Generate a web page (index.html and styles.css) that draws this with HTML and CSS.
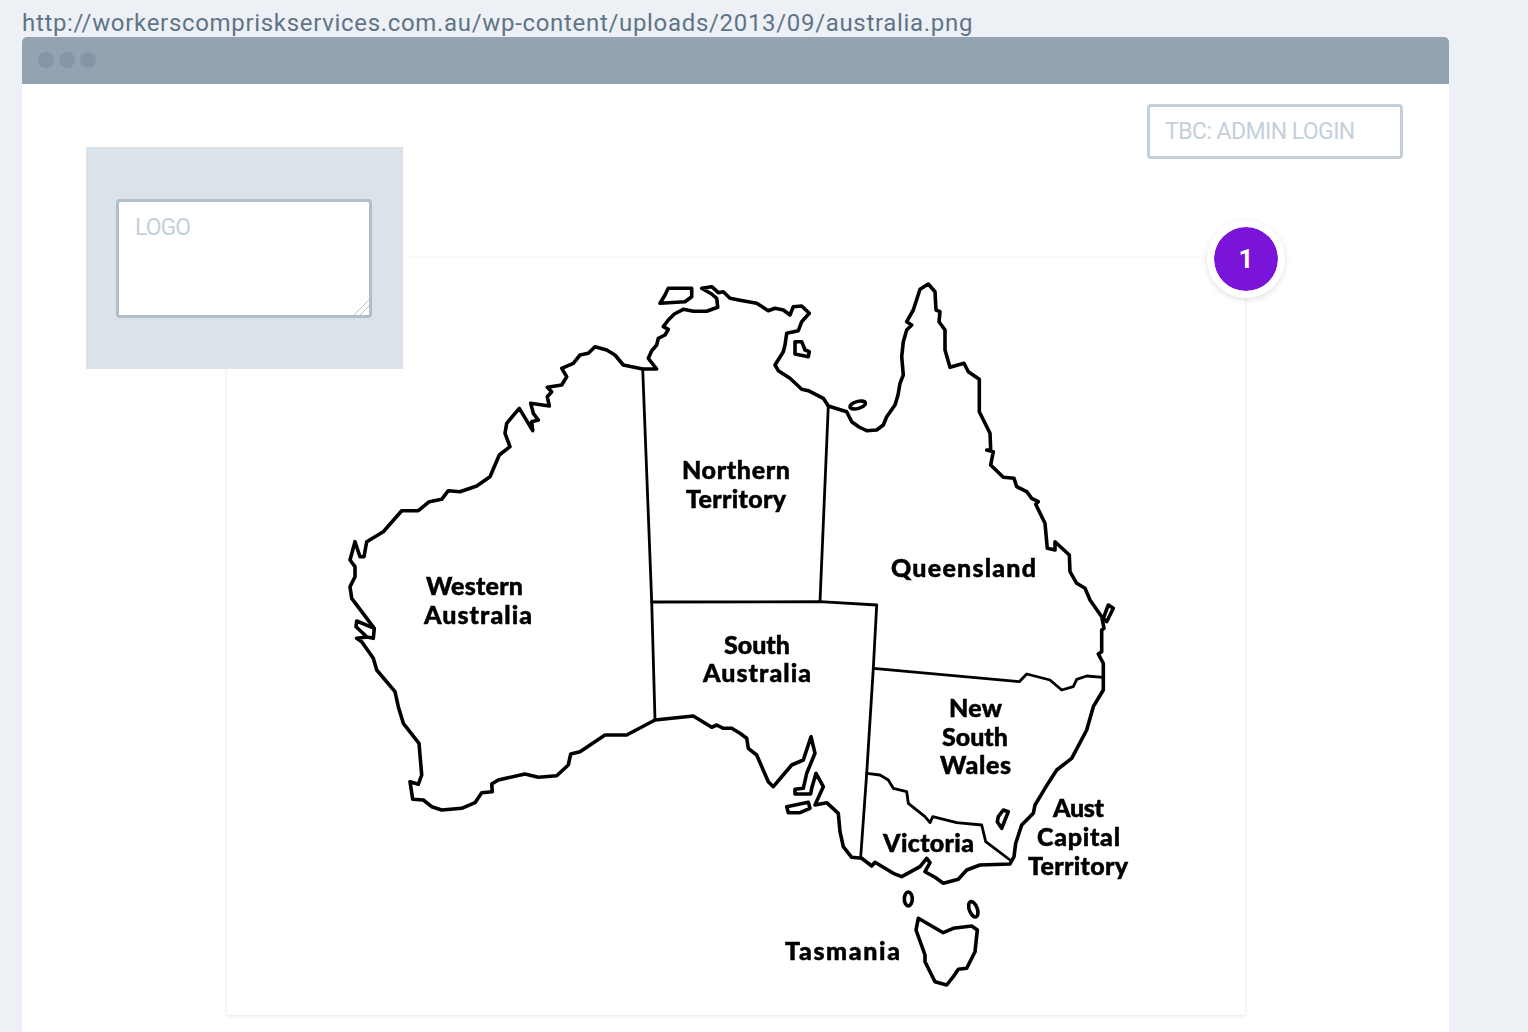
FILE: index.html
```html
<!DOCTYPE html>
<html lang="en">

<head>
    <meta charset="UTF-8">
    <meta name="viewport" content="width=device-width, initial-scale=1.0">
    <title>Admin wireframe</title>
    <link rel="stylesheet" href="styles.css">
</head>

<body>
    <p class="page-url">http://workerscompriskservices.com.au/wp-content/uploads/2013/09/australia.png</p>
    <div class="window">
        <div class="window-bar">
            <span class="dot"></span>
            <span class="dot"></span>
            <span class="dot"></span>
        </div>
        <div class="window-body">
            <div class="login-row">
                <input class="login-input" type="text" placeholder="TBC: ADMIN LOGIN">
            </div>
            <div class="logo-panel">
                <textarea class="logo-input" placeholder="LOGO"></textarea>
            </div>
            <div class="map-card">
                <span class="badge">1</span>
                <!-- viewBox uses page coordinates, so the numbers can be read off the screenshot -->
                <svg class="map" viewBox="227 257 1018 758">
                    <g class="coast">
                        <polygon points="642.7,369 656.7,369 648.3,358.3 651.7,350.7 656.7,345 658.3,338.3 665,335 668.3,329.3 663.3,326.7 668.3,320 674.3,314 683.3,309.3 693.3,311.3 706.7,311.3 717.7,307.3 716.7,298.3 711.7,294 701.7,288.3 711.7,286.7 718.3,292.7 723.3,291.7 730,298.3 740,300.3 756.7,303.3 768.3,310.7 775,308.3 783.3,310 790,315 793.3,306.7 801.7,306 809.3,313.3 801.7,321.7 798.3,330.7 786.7,333.3 785,345 783.3,351.7 775,365 778.3,370.7 790,378.3 801.7,389.3 808.3,390.7 823.3,398.3 828.3,406 846.7,411.7 851.7,421.7 859,427 866.7,430.7 876.7,430 883.3,425 886.7,416.7 895,405 898,395 900,383.3 903.3,375 901.7,356.7 903.3,341.7 906.7,330 911.7,325 906.7,321.7 913.3,310 920,289.3 928.3,284 935,291.7 936,310 940,311.7 939,321.7 945,330 945,350 950,367.3 964,363.3 968.3,371.7 979.3,379.3 979.3,411.7 990,433.3 990.7,450 986.7,450 993.3,451.7 990.7,465 1003.3,477.3 1014,478.3 1016.7,486.7 1026.7,491.7 1031.7,498.3 1038.3,501.7 1035.7,504.3 1045,523.3 1047.3,548.3 1055,550 1055,541.7 1069.3,555 1070,571.7 1076.7,583.3 1085,588.3 1090,600 1101.7,616.7 1104,628.3 1101.7,630 1101.7,651.7 1098.3,654 1103.3,663.3 1103.3,690 1093.3,706.7 1086.7,730 1071.7,758.3 1056.7,770 1045,788.3 1035,805 1033.3,813.3 1021.7,825 1015.7,843.3 1014,856.7 1010,864 980,865 966.7,870 958.3,879.3 943.3,883.3 935,877.3 925,871.7 930,862.7 926.7,858.3 920,866.7 901.7,876.7 893.3,873.3 875,862.3 871.7,866 861.7,858.3 851.7,857.3 843.3,846.7 840,831.7 838.3,813.3 826.7,802.7 815,805 823.3,786.7 816,773.3 811.7,788.3 810.7,794 795,794 795,789.3 803.3,788.3 806.7,773.3 815,753.3 811,736.7 803.3,760 791.7,765 773.3,786.7 768.3,781.7 756.7,755 748.3,748.3 746.7,738.3 740,733.3 731.7,728.3 723.3,728.3 716.7,725 711.7,727.3 693.3,716 655,720 626.7,735 605,735 580,751.7 570.7,754 568.3,765 556.7,775.7 538.3,777.3 525,774 498.3,780 491.7,784 492.3,791.7 481.7,792.7 475,802.7 461.7,808.3 441.7,810 431.7,806.7 423.3,800 412.7,799.3 410,781.7 418.3,784.3 421.7,775 419,743.3 403.3,723.3 398.3,706.7 395,691.7 376.7,670 373.3,658.3 361.7,641.7 356.7,638.3 367,637 373.3,638.3 374.3,628.3 356.7,621 356,626.7 367,637 373.3,638.3 374.3,628.3 361.7,611.7 351.7,598.3 350,586.7 355,576.7 355,566.7 350,560 355,541.7 360,556.7 364,556.7 366.7,541.7 383.3,531.7 401.7,510.7 418.3,510.7 429.3,501.7 441.7,499.3 448.3,490.7 460,491.7 476.7,486 490,476.7 499.3,455 510,446.7 505,433.3 506.7,423.3 519.3,408.3 532.7,430.7 531.7,421.7 538.3,420 533.3,413.3 530.7,403.3 549.3,406 547.3,396.7 551.7,391.7 547.3,387.3 561.7,385 566.7,376.7 561.7,368.3 573.3,363.3 580,355 588.3,353.3 595,346.7 606.7,350 615,355 623.3,365" />
                        <polygon points="668.3,288.3 691.7,288.3 691.7,296.7 685,301.7 660,303.3 665,295" />
                        <polygon points="795,341.7 801.7,341.7 805,350 809.3,351.7 808.3,356.7 795,354" />
                        <polygon points="1108.3,605 1113.3,608.3 1106.7,621.7 1103.3,618.3" />
                        <polygon points="786.7,806.7 808.3,802.3 810,808.3 800,812.7 788.3,812.7" />
                        <polygon points="998.3,816.7 1003.3,810 1008.3,811.7 1005,820 1001.7,828.3 997.3,821.7" />
                        <polygon points="918.3,918.3 943.3,932.7 953.3,928.3 971.7,926 977.3,930 975,951.7 966.7,968.3 958.3,969.3 953.3,976.7 946.7,985 935,981.7 925,961.7 925,955 916,930" />
                        <ellipse cx="857.7" cy="405" rx="8" ry="3.5" transform="rotate(-15 857.7 405)" />
                        <ellipse cx="908.3" cy="899" rx="4" ry="7" />
                        <ellipse cx="973.3" cy="909.3" rx="4" ry="8" transform="rotate(-20 973.3 909.3)" />
                    </g>
                    <g class="borders">
                        <polyline points="642.7,369 651.7,602 655,720" />
                        <polyline points="651.7,602 820,601.7 876.7,605 873.3,668.3 866.7,773.3 860.7,857" />
                        <polyline points="828.3,406 820,601.7" />
                        <polyline points="873.3,668.3 1019.3,681.7 1026.7,674 1050,680 1061.7,690 1073.3,686.7 1076.7,679.3 1086.7,676 1103.3,677.3" />
                        <polyline points="866.7,773.3 880,775 888.3,780 893.3,788.3 906.7,791.7 908.3,803.3 925,816.7 930,822.7 932.7,816.7 956.7,822.7 981.7,825 985.7,841.7 1010,860" />
                    </g>
                    <g class="labels">
                        <text x="736" y="479" textLength="108">Northern</text>
                        <text x="736" y="508" textLength="100">Territory</text>
                        <text x="963.5" y="577" textLength="145">Queensland</text>
                        <text x="474.5" y="595" textLength="97">Western</text>
                        <text x="478" y="624" textLength="108">Australia</text>
                        <text x="757" y="654" textLength="66">South</text>
                        <text x="757" y="682" textLength="108">Australia</text>
                        <text x="975.5" y="717" textLength="53">New</text>
                        <text x="975" y="746" textLength="66">South</text>
                        <text x="975.5" y="774" textLength="71">Wales</text>
                        <text x="928.5" y="852" textLength="91">Victoria</text>
                        <text x="1078.5" y="817" textLength="51">Aust</text>
                        <text x="1078.5" y="846" textLength="83">Capital</text>
                        <text x="1078" y="875" textLength="100">Territory</text>
                        <text x="842.5" y="960" textLength="115">Tasmania</text>
                    </g>
                </svg>
            </div>
        </div>
    </div>
</body>

</html>
```
FILE: styles.css
```css
* {
    box-sizing: border-box;
}

html,
body {
    height: 100%;
}

body {
    margin: 0;
    padding: 0 79px 0 22px;
    background-color: #edf1f6;
    font-family: "Roboto", "Liberation Sans", sans-serif;
    overflow: hidden;
    display: flex;
    flex-direction: column;
}

.page-url {
    margin: 0;
    height: 37px;
    padding-top: 9px;
    font-size: 24px;
    line-height: 28px;
    letter-spacing: 0.68px;
    color: #607487;
    white-space: nowrap;
}

.window {
    flex: 1;
    display: flex;
    flex-direction: column;
    border-radius: 5px 5px 0 0;
    overflow: hidden;
    background: #fff;
}

.window-bar {
    height: 47px;
    padding: 0 0 2px 16px;
    background-color: #94a3b1;
    display: flex;
    align-items: center;
    gap: 5px;
}

.dot {
    width: 16px;
    height: 16px;
    border-radius: 50%;
    background-color: #8596a6;
}

.window-body {
    position: relative;
    flex: 1;
}

.login-row {
    display: flex;
    justify-content: flex-end;
    padding: 20px 46px 0 0;
}

.login-input {
    width: 256px;
    height: 55px;
    padding: 0 16px 0 15px;
    border: 3px solid #c3d0db;
    border-radius: 4px;
    background: #fff;
    font: inherit;
    font-size: 23px;
    letter-spacing: -0.56px;
}

.login-input::placeholder {
    color: #c3d0db;
    opacity: 1;
}

.logo-panel {
    position: absolute;
    left: 64px;
    top: 63px;
    z-index: 2;
    width: 317px;
    height: 222px;
    padding: 52px 31px 0 30px;
    background-color: #dae2ea;
}

.logo-input {
    display: block;
    width: 256px;
    height: 119px;
    padding: 12px 16px;
    border: 3px solid #b0bfcc;
    border-radius: 4px;
    background: #fff;
    font: inherit;
    font-size: 23px;
    line-height: 28px;
    letter-spacing: -1px;
}

.logo-input::placeholder {
    color: #c3d0db;
    opacity: 1;
}

.logo-input::-webkit-resizer {
    background: linear-gradient(135deg, transparent 49%, #b5c3cf 49%, #b5c3cf 53%, transparent 53%, transparent 68%, #b5c3cf 68%, #b5c3cf 72%, transparent 72%);
}

.map-card {
    position: relative;
    width: 1018px;
    height: 758px;
    margin: 98px 0 0 205px;
    background: #fff;
    box-shadow: 0 1px 4px rgba(0, 0, 0, 0.1);
}

/* the reference map is a scaled up bitmap, so it is a little soft */
.map {
    display: block;
    width: 100%;
    height: 100%;
    filter: blur(0.6px);
}

.coast polygon,
.coast ellipse,
.borders polyline {
    fill: none;
    stroke: #000;
    stroke-linejoin: round;
    stroke-linecap: round;
}

.coast polygon,
.coast ellipse {
    stroke-width: 3.6;
}

.borders polyline {
    stroke-width: 2.8;
}

.labels text {
    font-family: "Lato", "Liberation Sans", sans-serif;
    font-weight: 900;
    font-size: 25px;
    text-anchor: middle;
    fill: #000;
    stroke: #000;
    stroke-width: 0.5;
}

.badge {
    position: absolute;
    right: -40px;
    top: -37px;
    width: 78px;
    height: 78px;
    border: 7px solid #fff;
    border-radius: 50%;
    background-color: #7a14d8;
    background-clip: padding-box;
    box-shadow: 0 2px 6px rgba(0, 0, 0, 0.12);
    color: #fff;
    font-size: 26px;
    font-weight: 700;
    display: flex;
    align-items: center;
    justify-content: center;
}
```
